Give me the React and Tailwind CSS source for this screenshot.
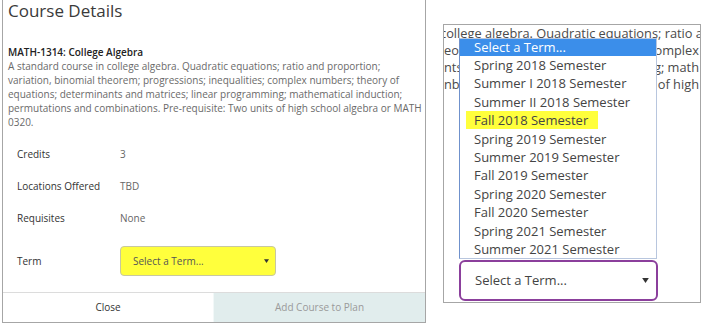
import React from "react";

const terms = [
  "Spring 2018 Semester",
  "Summer I 2018 Semester",
  "Summer II 2018 Semester",
  "Fall 2018 Semester",
  "Spring 2019 Semester",
  "Summer 2019 Semester",
  "Fall 2019 Semester",
  "Spring 2020 Semester",
  "Fall 2020 Semester",
  "Spring 2021 Semester",
  "Summer 2021 Semester",
];

const details = [
  { label: "Credits", value: "3" },
  { label: "Locations Offered", value: "TBD" },
  { label: "Requisites", value: "None" },
];

// text peeking out from behind the open list
const behind = [
  ["eor", "omplex"],
  ["nts", "ng; math"],
  ["nb", "of high"],
];

function Arrow({ className }) {
  return (
    <svg viewBox="0 0 8 6" className={className}>
      <path d="M0 0 L8 0 L4 6 Z" fill="currentColor" />
    </svg>
  );
}

export default function App() {
  return (
    <div className="flex w-[712px] h-[334px] bg-white text-[#333] font-['Open_Sans',sans-serif]">
      {/* Left: modal */}
      <div className="ml-[2px] w-[424px] h-[323px] flex flex-col border-x border-b border-[#a6a6a6]">
        <h2 className="pl-[5px] text-[17px] leading-[22px] text-[#3a3a3a]">Course Details</h2>

        <div className="mt-[23px] pl-[5px] pr-[1px] text-[10px] leading-[14px]">
          <div className="font-semibold text-[#222]">MATH-1314: College Algebra</div>
          <p className="text-[#6a6a6a]">
            A standard course in college algebra. Quadratic equations; ratio and proportion;
            <br />
            variation, binomial theorem; progressions; inequalities; complex numbers; theory of
            <br />
            equations; determinants and matrices; linear programming; mathematical induction;
            <br />
            permutations and combinations. Pre-requisite: Two units of high school algebra or MATH
            <br />
            0320.
          </p>
        </div>

        <div className="mt-[9px] pl-[14px] text-[10px]">
          {details.map((d) => (
            <div key={d.label} className="flex items-center h-[32px]">
              <div className="w-[103px] text-[#333]">{d.label}</div>
              <div className="text-[#666]">{d.value}</div>
            </div>
          ))}
          <div className="flex items-center h-[30px] mt-[12px]">
            <div className="w-[103px] text-[#333]">Term</div>
            <div className="w-[156px] h-[30px] flex items-center justify-between pl-[12px] pr-[6px] rounded-[4px] border border-[#c8c8a0] bg-[#ffff3c] text-[#555]">
              <span>Select a Term...</span>
              <Arrow className="w-[5px] h-[4px] text-[#333]" />
            </div>
          </div>
        </div>

        <div className="mt-auto flex h-[30px] border-t border-[#dcdcdc] text-[10px]">
          <button className="w-[210px] flex items-center justify-center bg-white text-[#333]">Close</button>
          <button className="flex-1 flex items-center justify-center bg-[#e1eded] border-l border-[#f2f8f8] text-[#9a9a9a]">
            Add Course to Plan
          </button>
        </div>
      </div>

      {/* Right: zoomed dropdown */}
      <div className="relative ml-[17px] mt-[24px] w-[258px] h-[279px] flex flex-col border border-[#a6a6a6] overflow-hidden">
        <div className="text-[12.8px] leading-[17px] text-[#4a4a4a] whitespace-nowrap">
          <div className="-ml-[4px]">college algebra. Quadratic equations; ratio and proportion;</div>
          {behind.map(([l, r]) => (
            <div key={l} className="flex justify-between">
              <span>{l}</span>
              <span className="pr-[1px]">{r}</span>
            </div>
          ))}
        </div>

        <div className="absolute left-[15px] top-[13px] w-[198px] bg-white border border-[#b8c6de] border-l-[#6f91cc] text-[13px] leading-[18.4px] text-[#444]">
          <div className="bg-[#3b8eea] text-white pl-[14px] leading-[17px]">Select a Term...</div>
          {terms.map((t) => (
            <div key={t} className="pl-[14px]">
              {t === "Fall 2018 Semester" ? (
                <span className="-ml-[8px] pl-[8px] pr-[10px] bg-[#ffff3c]">{t}</span>
              ) : (
                t
              )}
            </div>
          ))}
        </div>

        <div className="mt-auto mb-[1px] ml-[15px] w-[199px] h-[41px] flex items-center justify-between pl-[14px] pr-[7px] rounded-[6px] border-2 border-[#8b3f9c] text-[13px] text-[#444]">
          <span>Select a Term...</span>
          <Arrow className="w-[7px] h-[5px] text-[#333]" />
        </div>
      </div>
    </div>
  );
}
